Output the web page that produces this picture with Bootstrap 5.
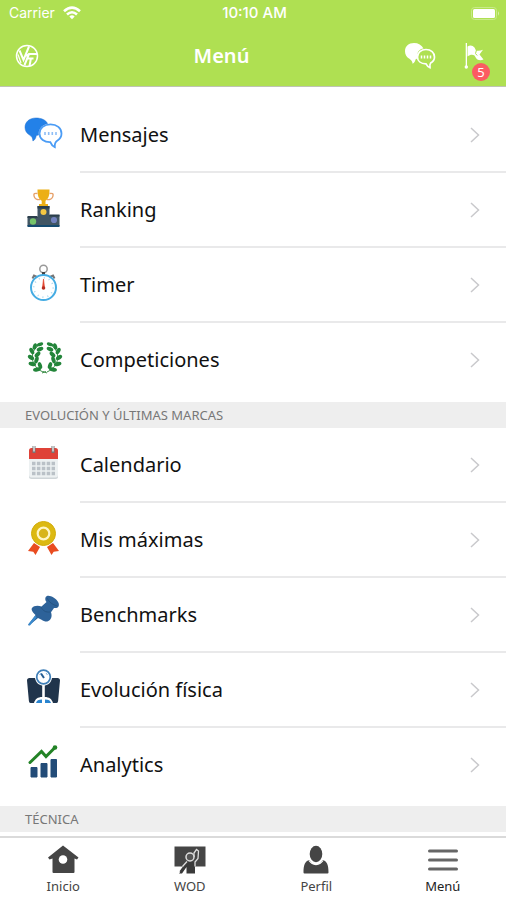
<!DOCTYPE html>
<html lang="es">
<head>
<meta charset="utf-8">
<meta name="viewport" content="width=device-width, initial-scale=1">
<title>Menú</title>
<link href="https://cdn.jsdelivr.net/npm/bootstrap@5.3.0/dist/css/bootstrap.min.css" rel="stylesheet">
<style>
  body { font-family: "Noto Sans", "Open Sans", sans-serif; color: #111; background: #fff; }
  svg { display: block; flex: none; }
  .app-header { background: #afe052; border-bottom: 1px solid #bfc4b4; height: 87px; color: #fff; }
  .status-bar { font-family: Inter, "Liberation Sans", sans-serif; font-size: 14px; line-height: 26px; padding: 0 6px 0 9px; }
  .status-bar > * { flex: 1 1 0; }
  .status-time { font-size: 15px; font-weight: 500; }
  .title-bar { height: 60px; padding: 0 16px 0 15px; }
  .title-bar h1 { font-size: 20px; line-height: 26px; font-weight: 600; }
  .bar-btn { background: none; border: 0; padding: 0; color: #fff; }
  .flag-count { position: absolute; left: 8px; top: 20px; width: 18px; height: 18px; border-radius: 9px; background: #fb5b62; font-size: 13px; line-height: 18px; text-align: center; }
  .menu-first { padding: 11px 0 4px; }
  .menu-next { padding-bottom: 3px; }
  .menu-row { height: 75px; padding-left: 24px; color: #111; text-decoration: none; font-size: 20px; line-height: 26px; font-weight: 400; }
  .menu-icon { width: 56px; padding-bottom: 6px; }
  .menu-text { height: 75px; padding-right: 26px; border-bottom: 2px solid #e9e9ea; }
  li:last-child .menu-text { border-bottom-color: transparent; }
  .section-title { background: #eee; color: #777; font-size: 13px; line-height: 26px; font-weight: 400; padding-left: 25px; }
  .page-main { padding-bottom: 67px; }
  .tab-bar { height: 64px; background: #fff; border-top: 2px solid #dadada; }
  .tab-link { color: #444; text-decoration: none; font-size: 13px; line-height: 18px; font-weight: 400; padding-top: 7px; }
  .tab-link.active { color: #222; }
  .tab-link svg { margin-bottom: 2px; }
</style>
</head>
<body>
<svg width="0" height="0" class="position-absolute" aria-hidden="true">
  <symbol id="chevron" viewBox="0 0 10 18"><path d="M1 2 8.500 9 1 16" fill="none" stroke="#c9c9cc" stroke-width="1.500"/></symbol>
</svg>

<header class="app-header sticky-top">
  <div class="status-bar d-flex align-items-center">
    <div class="d-flex align-items-center gap-2"><span>Carrier</span>
      <svg width="18" height="14" viewBox="0 0 18 14" fill="none" stroke="#fff" stroke-width="2.600" aria-hidden="true"><path d="M1 5.200Q9-2 17 5.200M4 8.500Q9 4 14 8.500"/><path d="M6.300 10.500Q9 8.200 11.700 10.500L9 13.300Z" fill="#fff" stroke="none"/></svg>
    </div>
    <div class="status-time text-center">10:10 AM</div>
    <div class="d-flex justify-content-end">
      <svg width="29" height="13" viewBox="0 0 29 13" aria-hidden="true"><rect x=".5" y=".5" width="25" height="12" rx="3" fill="none" stroke="#c8ea8b"/><rect x="2" y="2" width="22" height="9" rx="1.500" fill="#fff"/><path d="M27 4.300q2 2.200 0 4.400z" fill="#d8f0aa"/></svg>
    </div>
  </div>
  <div class="title-bar d-flex align-items-center">
    <button class="bar-btn" type="button" aria-label="Inicio del box">
      <svg width="24" height="24" viewBox="0 0 24 24" fill="none" stroke="#fff" stroke-width="1.500"><circle cx="12" cy="12" r="10.500"/><path d="M4.500 6.500 8.500 16 14 2.500M22 10h-8l-4.500 11M11 12l3-2M12.500 14.500h6M16 14l-1.500 8" stroke-width="2"/><path d="M3 10.500 6 19" stroke-width="1.200"/></svg>
    </button>
    <h1 class="flex-grow-1 text-center mb-0">Menú</h1>
    <div class="d-flex align-items-center">
      <button class="bar-btn me-4" type="button" aria-label="Mensajes">
        <svg width="32" height="26" viewBox="0 0 32 26"><path d="M10 0C4.600 0 1 3.300 1 8.200c0 3.300 1.500 5.800 4 7.200 1 .8 3.500 2 3.500 5.300 2-.8 2.500-2.200 3-4.200l2.500-1.500C12 10 15 6 19.500 5.500 17.700 2 14.300 0 10 0Z" fill="#fff"/><path d="M22 6.500c5 0 8.500 3 8.500 7.500 0 2.700-1.500 4.800-3.900 6.100-.7.700-.8 2.700-.6 4.500-1.700-.6-3-1.700-4-3.700-5.200 0-8.500-2.900-8.500-6.900 0-4.500 3.500-7.500 8.500-7.500Z" fill="#afe052" stroke="#fff" stroke-width="1.700"/><path d="M17.500 12.500v3m3-3v3m3-3v3m3-3v3" stroke="#fff" stroke-width="1.500"/></svg>
      </button>
      <button class="bar-btn position-relative ms-1" type="button" aria-label="Avisos">
        <svg width="26" height="26" viewBox="0 0 26 26" fill="#fff"><path d="M1.700 0H3v25H1.700z"/><path d="M3.500 3.500C6 1.800 8.500 2 10.500 4.500l1.500 3c2 .5 4.500.3 7-.8l-3.500 4.800 4 5c-3 1.300-6 .8-7.500-1.500l-1.500-2.500C8.500 11 6 11.500 3.500 13.500z"/><circle cx="2.300" cy="24" r="1.700"/><path d="m12.500 7-1 3.500 1.700 2" stroke="#afe052" stroke-width="1" fill="none"/></svg>
        <span class="flag-count">5</span>
      </button>
    </div>
  </div>
</header>

<main class="page-main">
  <ul class="list-unstyled menu-first mb-0">
    <li><a href="#mensajes" class="menu-row d-flex align-items-center"><span class="menu-icon">
      <svg width="39" height="32" viewBox="0 0 39 32"><path d="M12 1C5.600 1 1 4.800 1 10.300c0 3.300 1.600 6 4.600 7.800 2 1.200 3.300 3 3.300 5.900 2-1 3-3 3.400-5.500l2.200-.5C14.300 12.500 17.500 8 23.500 6.500 22 3.200 17.500 1 12 1Z" fill="#2381e8" stroke="#1c6fd0" stroke-width=".5"/><path d="M26.500 7.300C32.800 7.300 37.500 11 37.500 16.500c0 3-1.500 5.500-4 7-2 1.200-3 3.500-2.700 6.600-2.200-.9-3.500-2.500-4.500-5C20.500 25.300 15.500 22 15.500 16.500c0-5.500 4.700-9.200 11-9.200Z" fill="#fff" stroke="#4b9cf5" stroke-width="1.800"/><path d="M21 15v3m3.700-3v3m3.600-3v3m3.700-3v3" stroke="#8ebdf5" stroke-width="1.600"/></svg>
    </span><span class="menu-text flex-grow-1 d-flex align-items-center justify-content-between">Mensajes<svg width="10" height="18"><use href="#chevron"/></svg></span></a></li>
    <li><a href="#ranking" class="menu-row d-flex align-items-center"><span class="menu-icon">
      <svg width="38" height="40" viewBox="0 0 38 40"><path d="M3.500 29h10V18h12v9h10v11h-32z" fill="#415563"/><path d="M13.500 18h12v2.500h-12zM3.500 28h10v2h-10zM25.500 26.500h10v2h-10z" fill="#2b3e4c"/><path d="M3.500 37h32v2h-32z" fill="#144a70"/><circle cx="19.500" cy="24" r="3" fill="#f5c842"/><circle cx="9" cy="33.500" r="3.200" fill="#75c46a"/><circle cx="30" cy="32" r="3.100" fill="#7181bf"/><path d="M13.500 1.500h12c0 6-1 9.500-4 11.300V16H24v2h-9v-2h2.700v-3.200C14.500 11 13.500 7.500 13.500 1.500Z" fill="#ecaf16"/><path d="M13.500 5.500c-3-.5-4 .2-3.500 2.300.5 2.500 3 4.200 6 3.800M25.500 5.500c3-.5 4 .2 3.500 2.300-.5 2.500-3 4.200-6 3.800" fill="none" stroke="#e7a26b" stroke-width="1.400"/></svg>
    </span><span class="menu-text flex-grow-1 d-flex align-items-center justify-content-between">Ranking<svg width="10" height="18"><use href="#chevron"/></svg></span></a></li>
    <li><a href="#timer" class="menu-row d-flex align-items-center"><span class="menu-icon">
      <svg width="38" height="38" viewBox="0 0 38 38"><circle cx="19.500" cy="5" r="3.700" fill="none" stroke="#999" stroke-width="1.500"/><path d="M18 8h3v3h-3z" fill="#444"/><path d="m8.500 14.500 1.500-3 3 1.500M30.500 14.500l-1.500-3-3 1.500" fill="none" stroke="#777" stroke-width="2"/><circle cx="19.500" cy="23.500" r="12.500" fill="#fff" stroke="#45ace3" stroke-width="2"/><circle cx="19.500" cy="23.500" r="9.700" fill="none" stroke="#a9d8ef" stroke-width="1.700" stroke-dasharray="1 4.080"/><path d="m19.500 15-1 8.500h2z" fill="#e34731" stroke="#e34731" stroke-width=".7"/><circle cx="19.500" cy="24" r="1.800" fill="#b72e22"/></svg>
    </span><span class="menu-text flex-grow-1 d-flex align-items-center justify-content-between">Timer<svg width="10" height="18"><use href="#chevron"/></svg></span></a></li>
    <li><a href="#competiciones" class="menu-row d-flex align-items-center"><span class="menu-icon">
      <svg width="42" height="34" viewBox="0 0 42 34"><defs><g id="branch"><path d="M14 4C4 11 5 25 18 31" fill="none" stroke="#3c8e48" stroke-width="1"/><g fill="#23853a"><ellipse cx="15" cy="3.300" rx="3.300" ry="1.700" transform="rotate(-20 15 3.300)"/><ellipse cx="9.800" cy="5.500" rx="3.400" ry="2" transform="rotate(-75 9.800 5.500)"/><ellipse cx="15" cy="8.200" rx="3.500" ry="2" transform="rotate(-24 15 8.200)"/><ellipse cx="6.800" cy="10" rx="3.500" ry="2" transform="rotate(60 6.800 10)"/><ellipse cx="12.500" cy="13.500" rx="3.500" ry="2" transform="rotate(-45 12.500 13.500)"/><ellipse cx="6" cy="16.500" rx="3.500" ry="2.100" transform="rotate(35 6 16.500)"/><ellipse cx="11.500" cy="19" rx="3.600" ry="2" transform="rotate(-72 11.500 19)"/><ellipse cx="7.300" cy="23" rx="3.800" ry="2.100" transform="rotate(15 7.300 23)"/><ellipse cx="15" cy="24.500" rx="3.500" ry="2" transform="rotate(72 15 24.500)"/><ellipse cx="12" cy="28.500" rx="4" ry="2" transform="rotate(-10 12 28.500)"/></g></g></defs><use href="#branch" x="1"/><use href="#branch" transform="matrix(-1 0 0 1 41 0)"/><path d="m18 32 4-1.500m1 1.500-4-1.500" stroke="#3c8e48"/></svg>
    </span><span class="menu-text flex-grow-1 d-flex align-items-center justify-content-between">Competiciones<svg width="10" height="18"><use href="#chevron"/></svg></span></a></li>
  </ul>

  <h2 class="section-title mb-0">EVOLUCIÓN Y ÚLTIMAS MARCAS</h2>
  <ul class="list-unstyled menu-next mb-0">
    <li><a href="#calendario" class="menu-row d-flex align-items-center"><span class="menu-icon">
      <svg width="38" height="36" viewBox="0 0 38 36"><rect x="5" y="5" width="29" height="29" rx="2.500" fill="#cfd5d8"/><rect x="5" y="4" width="29" height="28.500" rx="2.500" fill="#edf1f2"/><path d="M5 14V5.500Q5 3 7.500 3h24Q34 3 34 5.500V14z" fill="#df4238"/><path d="M10 1v7M29 1v7" stroke="#777" stroke-width="3"/><path d="M10 1v5.500M29 1v5.500" stroke="#dde0e1" stroke-width="1.500"/><path d="M8 18.500h23M8 23.500h23M8 28.500h23" stroke="#bac1c7" stroke-width="3.500" stroke-dasharray="3.500 1.400"/></svg>
    </span><span class="menu-text flex-grow-1 d-flex align-items-center justify-content-between">Calendario<svg width="10" height="18"><use href="#chevron"/></svg></span></a></li>
    <li><a href="#maximas" class="menu-row d-flex align-items-center"><span class="menu-icon">
      <svg width="38" height="38" viewBox="0 0 38 38"><path d="m10 24 6 4-4.500 8-2.200-3.300L4 32z" fill="#e94c20"/><path d="m29 24-6 4 4.500 8 2.200-3.300L35 32z" fill="#e94c20"/><circle cx="19.500" cy="14.500" r="12" fill="#dcb912" stroke="#d3ad0b"/><circle cx="19.500" cy="14.500" r="5.800" fill="#d8b51b" stroke="#fff6c5" stroke-width="2.200"/></svg>
    </span><span class="menu-text flex-grow-1 d-flex align-items-center justify-content-between">Mis máximas<svg width="10" height="18"><use href="#chevron"/></svg></span></a></li>
    <li><a href="#benchmarks" class="menu-row d-flex align-items-center"><span class="menu-icon">
      <svg width="38" height="38" viewBox="0 0 38 38"><path d="M21.500 3.500c1-2.800 5-2 8 0 4 2.500 6.500 6.200 5 9-.8 1.500-2.500 1.800-4.500 1.500l-3 4.200c1.500 4.200 0 7.300-2.700 8.800-2 1-4.200.5-6.300-1L14 24l-9 7.500-1-.5 7.500-10C8 17.500 7 15.500 8 14c1.700-2.500 6-3 9.500-1.500L22.500 8C21.300 6.700 21 5 21.500 3.500Z" fill="#2d6299"/><path d="M23 4c2 4 5.500 7 10.500 8M17 13c1.500 3.500 4.500 5.500 9 5" fill="none" stroke="#255584" stroke-width="1"/><path d="m5 31 7-8.500" stroke="#398ace" stroke-width="2"/></svg>
    </span><span class="menu-text flex-grow-1 d-flex align-items-center justify-content-between">Benchmarks<svg width="10" height="18"><use href="#chevron"/></svg></span></a></li>
    <li><a href="#evolucion" class="menu-row d-flex align-items-center"><span class="menu-icon">
      <svg width="38" height="38" viewBox="0 0 38 38"><path d="M5.500 9H11c1 5 4 7 7.200 7.500V28c-4.500 0-7 2-8.200 6H6.500Q5 34 4.900 32L3 11.500Q3 9 5.500 9ZM33.500 9H28c-1 5-4 7-7.200 7.500V28c4.500 0 7 2 8.200 6h3.500q1.500 0 1.600-2L36 11.500q0-2.500-2.500-2.500Z" fill="#20344b"/><circle cx="19.500" cy="8" r="6.800" fill="#fff" stroke="#3f7fb8" stroke-width="1.700"/><path d="m17 4.500 3 4.500" stroke="#235b91" stroke-width="2"/><path d="M15.500 6 17 4m5 0 1.500 2" stroke="#87b6df"/><path d="M12 34c.5-2.500 2.500-3.500 6-3.500V34zm15 0c-.5-2.500-2.500-3.500-6-3.500V34z" fill="#2984cf"/></svg>
    </span><span class="menu-text flex-grow-1 d-flex align-items-center justify-content-between">Evolución física<svg width="10" height="18"><use href="#chevron"/></svg></span></a></li>
    <li><a href="#analytics" class="menu-row d-flex align-items-center"><span class="menu-icon">
      <svg width="38" height="38" viewBox="0 0 38 38"><path d="M7 23.500h6V33H7zM17 19.500h6V33h-6zM27 15.500h5.500V33H27z" fill="#234c78" stroke="#234c78" stroke-linejoin="round"/><path d="m6 18.500 11.500-11 4.500 5 9-9" fill="none" stroke="#238326" stroke-width="3" stroke-linecap="round"/><circle cx="31" cy="3.500" r="2.300" fill="#238326"/></svg>
    </span><span class="menu-text flex-grow-1 d-flex align-items-center justify-content-between">Analytics<svg width="10" height="18"><use href="#chevron"/></svg></span></a></li>
  </ul>
  <h2 class="section-title mb-0">TÉCNICA</h2>
</main>

<nav class="tab-bar fixed-bottom d-flex" aria-label="Principal">
  <a href="#inicio" class="tab-link w-25 d-flex flex-column align-items-center"><svg width="32" height="30" viewBox="0 0 32 30"><path d="m16 .5 15.500 12-1.500 2-2.500-1V27q0 1-1 1h-20q-1 0-1-1V13.500l-3 1-1.500-2z" fill="#454545"/><circle cx="16" cy="14.500" r="4.300" fill="#fff"/></svg>Inicio</a>
  <a href="#wod" class="tab-link w-25 d-flex flex-column align-items-center"><svg width="32" height="30" viewBox="0 0 32 30"><path d="M.5 1.500h31v20H.5z" fill="#454545"/><path d="M5 28.500 14 17h7v11.500h-8.500V22L8 28.500z" fill="#3a3a3a"/><path d="m6.500 27 7-9.500" stroke="#3a3a3a" stroke-width="2.500"/><path d="m8.500 21.500 4.500-5m8 5V17l3-3.500.5-7.500-2-1.500L20 8v4" fill="none" stroke="#ddd" stroke-width="1.300"/><circle cx="16" cy="12" r="4" fill="#555" stroke="#ddd" stroke-width="1.500"/></svg>WOD</a>
  <a href="#perfil" class="tab-link w-25 d-flex flex-column align-items-center"><svg width="32" height="30" viewBox="0 0 32 30" fill="#454545"><ellipse cx="16" cy="9" rx="6.300" ry="8.300"/><path d="M9.500 15c1.500 3 3.500 4.500 6.500 4.500s5-1.500 6.500-4.500c4.500 1 6 5 6 12.500q0 1-1 1h-23q-1 0-1-1C3.500 20 5 16 9.500 15Z"/><path d="M9 15.500c1.700 2.500 4 4 7 4s5.300-1.500 7-4" fill="none" stroke="#fff" stroke-width="1.300"/></svg>Perfil</a>
  <a href="#menu" class="tab-link active w-25 d-flex flex-column align-items-center" aria-current="page"><svg width="32" height="30" viewBox="0 0 32 30"><path d="M2.500 6h27m-27 9h27m-27 9h27" stroke="#666" stroke-width="3" stroke-linecap="round"/></svg>Menú</a>
</nav>
<script src="https://cdn.jsdelivr.net/npm/bootstrap@5.3.0/dist/js/bootstrap.bundle.min.js"></script>
</body>
</html>
